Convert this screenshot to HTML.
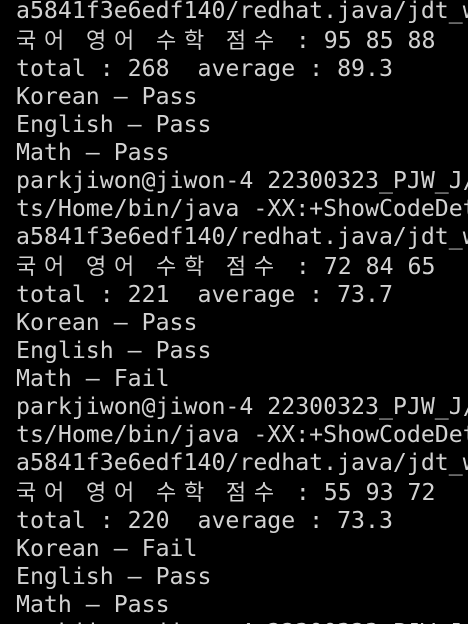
<!DOCTYPE html><html><head><meta charset="utf-8"><style>
html,body{margin:0;padding:0;background:#000;width:468px;height:624px;overflow:hidden}
pre{margin:-3px 0 0 0;padding:0 0 0 16px;font-family:"DejaVu Sans Mono","Liberation Mono","Noto Sans CJK KR",monospace;font-size:23.2px;line-height:28px;color:#d2d2d2;white-space:pre}
.k{display:inline-block;width:28px;text-align:left;font-family:"Noto Sans CJK KR",sans-serif;font-size:22px}
</style></head><body><pre>a5841f3e6edf140/redhat.java/jdt_ws
<span class="k">국</span><span class="k">어</span> <span class="k">영</span><span class="k">어</span> <span class="k">수</span><span class="k">학</span> <span class="k">점</span><span class="k">수</span> : 95 85 88
total : 268  average : 89.3
Korean – Pass
English – Pass
Math – Pass
parkjiwon@jiwon-4 22300323_PJW_J/
ts/Home/bin/java -XX:+ShowCodeDet
a5841f3e6edf140/redhat.java/jdt_ws
<span class="k">국</span><span class="k">어</span> <span class="k">영</span><span class="k">어</span> <span class="k">수</span><span class="k">학</span> <span class="k">점</span><span class="k">수</span> : 72 84 65
total : 221  average : 73.7
Korean – Pass
English – Pass
Math – Fail
parkjiwon@jiwon-4 22300323_PJW_J/
ts/Home/bin/java -XX:+ShowCodeDet
a5841f3e6edf140/redhat.java/jdt_ws
<span class="k">국</span><span class="k">어</span> <span class="k">영</span><span class="k">어</span> <span class="k">수</span><span class="k">학</span> <span class="k">점</span><span class="k">수</span> : 55 93 72
total : 220  average : 73.3
Korean – Fail
English – Pass
Math – Pass
parkjiwon@jiwon-4 22300323_PJW_J/
</pre></body></html>
